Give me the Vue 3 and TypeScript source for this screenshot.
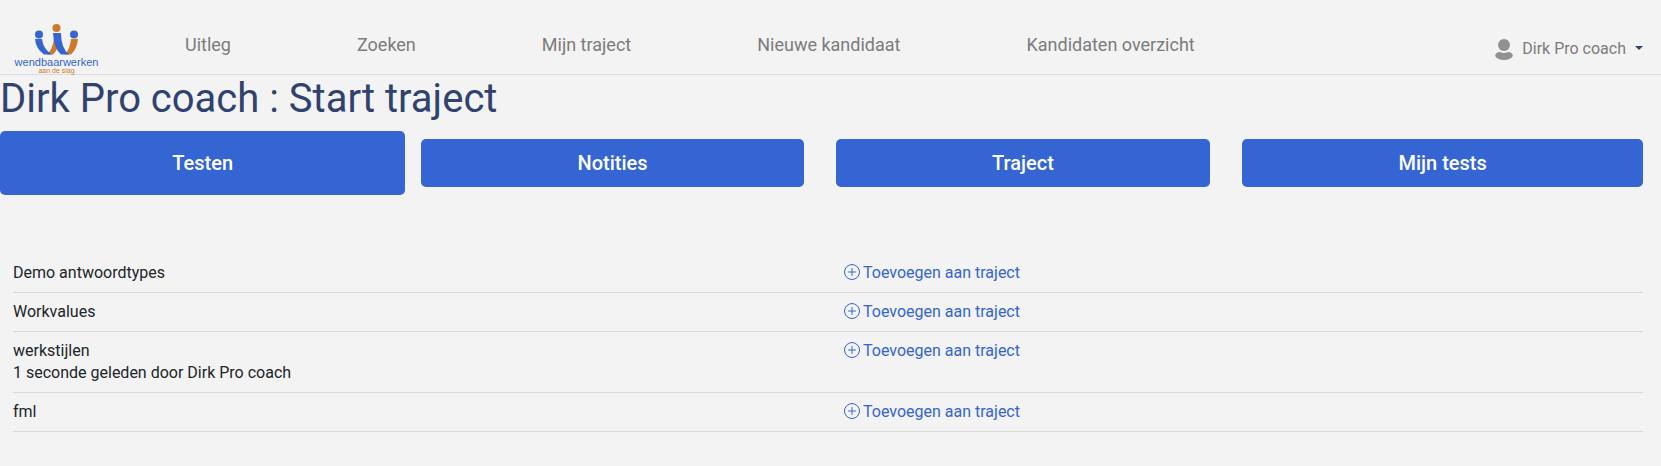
<script setup lang="ts">
import { ref } from 'vue'

interface TestItem {
  name: string
  note?: string
}

const links: string[] = ['Uitleg', 'Zoeken', 'Mijn traject', 'Nieuwe kandidaat', 'Kandidaten overzicht']
const tabs: string[] = ['Testen', 'Notities', 'Traject', 'Mijn tests']
const activeTab = ref<string>('Testen')
const user = 'Dirk Pro coach'
const tests: TestItem[] = [
  { name: 'Demo antwoordtypes' },
  { name: 'Workvalues' },
  { name: 'werkstijlen', note: '1 seconde geleden door Dirk Pro coach' },
  { name: 'fml' },
]
</script>

<template>
  <div class="page">
    <header class="topbar">
      <a class="logo" href="#" aria-label="wendbaarwerken aan de slag">
        <svg class="mark" viewBox="0 0 45 32" width="45" height="32" aria-hidden="true">
          <path d="M13 30.500Q19 25 20 14H22L24 23Q22 28 19 30.500Z" fill="#cd7a29" />
          <path d="M31 30.500Q36 25 37 15H44Q43 25 37 30.500Z" fill="#cd7a29" />
          <path d="M1 15H8Q9 25 18 30.500H10Q2 25 1 15Z" fill="#3465d3" />
          <path d="M19 9H27Q27 24 35 30.500H27Q20 25 19 9Z" fill="#3465d3" />
          <circle cx="5" cy="10.500" r="4" fill="#3465d3" />
          <circle cx="22.500" cy="4" r="4" fill="#cd7a29" />
          <circle cx="40" cy="10.500" r="4" fill="#3465d3" />
        </svg>
        <span class="brand">wendbaarwerken</span>
        <span class="slogan">aan de slag</span>
      </a>
      <nav class="links" aria-label="Hoofdmenu">
        <a v-for="link in links" :key="link" href="#">{{ link }}</a>
      </nav>
      <button class="user" type="button" aria-haspopup="menu">
        <svg viewBox="0 0 18 22" width="18" height="22" aria-hidden="true">
          <circle cx="9" cy="7" r="6" fill="#919191" />
          <path d="M0 18Q1 14 5 14Q9 16 13 14Q17 14 18 18Q15 22 9 22Q3 22 0 18Z" fill="#919191" />
        </svg>
        <span>{{ user }}</span>
        <svg class="caret" viewBox="0 0 8 6" width="8" height="6" aria-hidden="true">
          <path d="M0 0H8L4 4Z" fill="#2f4270" />
        </svg>
      </button>
    </header>

    <main>
      <h1>{{ user }} : Start traject</h1>
      <div class="tabs" role="tablist">
        <button
          v-for="tab in tabs"
          :key="tab"
          type="button"
          role="tab"
          class="tab"
          :class="{ active: tab === activeTab }"
          :aria-selected="tab === activeTab"
          @click="activeTab = tab"
        >
          {{ tab }}
        </button>
      </div>
      <ul class="tests">
        <li v-for="test in tests" :key="test.name">
          <div>
            <div>{{ test.name }}</div>
            <div v-if="test.note">{{ test.note }}</div>
          </div>
          <a class="add" href="#">
            <svg viewBox="0 0 16 18" width="16" height="18" aria-hidden="true">
              <path
                d="M8 .5a7.5 7.5 0 1 0 0 15a7.5 7.5 0 1 0 0-15M8 4.5V11.5M4.5 8H11.5"
                fill="none"
                stroke="currentColor"
                stroke-linecap="round"
              />
            </svg>
            <span>Toevoegen aan traject</span>
          </a>
        </li>
      </ul>
    </main>
  </div>
</template>

<style>
body {
  margin: 0;
  background: #f3f3f3;
}
</style>

<style scoped>
.page {
  color: #212529;
  font-family: Roboto, "Liberation Sans", sans-serif;
  font-size: 16px;
  line-height: 22px;
}
a {
  text-decoration: none;
}
button {
  border: 0;
  font-family: inherit;
  cursor: pointer;
}
.topbar {
  display: flex;
  align-items: flex-start;
  padding: 24px 18px 0 15px;
  border-bottom: 1px solid #dcdcdc;
}
.logo {
  display: flex;
  flex-direction: column;
  align-items: center;
  width: 83px;
  height: 50px;
  font-family: "Liberation Sans", Arial, sans-serif;
}
.brand {
  color: #3465d3;
  font-size: 11px;
  line-height: 12px;
}
.slogan {
  color: #cd7a29;
  font-size: 7px;
  line-height: 6px;
}
.links {
  display: flex;
  margin-left: 24px;
}
.links a {
  padding: 10px 63px;
  color: #7c7c7c;
  font-size: 18px;
  line-height: 22px;
  white-space: nowrap;
}
.user {
  display: flex;
  align-items: center;
  gap: 9px;
  margin: 14px 0 0 auto;
  padding: 0;
  background: none;
  color: #7c7c7c;
  font-size: 16px;
  line-height: 22px;
  white-space: nowrap;
}
h1 {
  margin: 0 0 8px;
  color: #2f4270;
  font-size: 40px;
  font-weight: 400;
  line-height: 48px;
}
.tabs {
  display: flex;
  align-items: center;
  gap: 32px;
  padding-right: 18px;
}
.tab {
  flex: 1 1 auto;
  padding: 12px 16px;
  border-radius: 5px;
  background: #3465d3;
  color: #fff;
  font-size: 20px;
  font-weight: 500;
  line-height: 24px;
}
.tab.active {
  margin-right: -16px;
  padding: 20px 32px;
}
.tests {
  margin: 59px 18px 0 13px;
  padding: 0;
  list-style: none;
}
.tests li {
  display: grid;
  grid-template-columns: 1fr 1fr;
  align-items: start;
  column-gap: 32px;
  padding: 8px 0;
  border-bottom: 1px solid #dadada;
}
.add {
  display: flex;
  align-items: center;
  gap: 3px;
  color: #3465d3;
}
</style>
